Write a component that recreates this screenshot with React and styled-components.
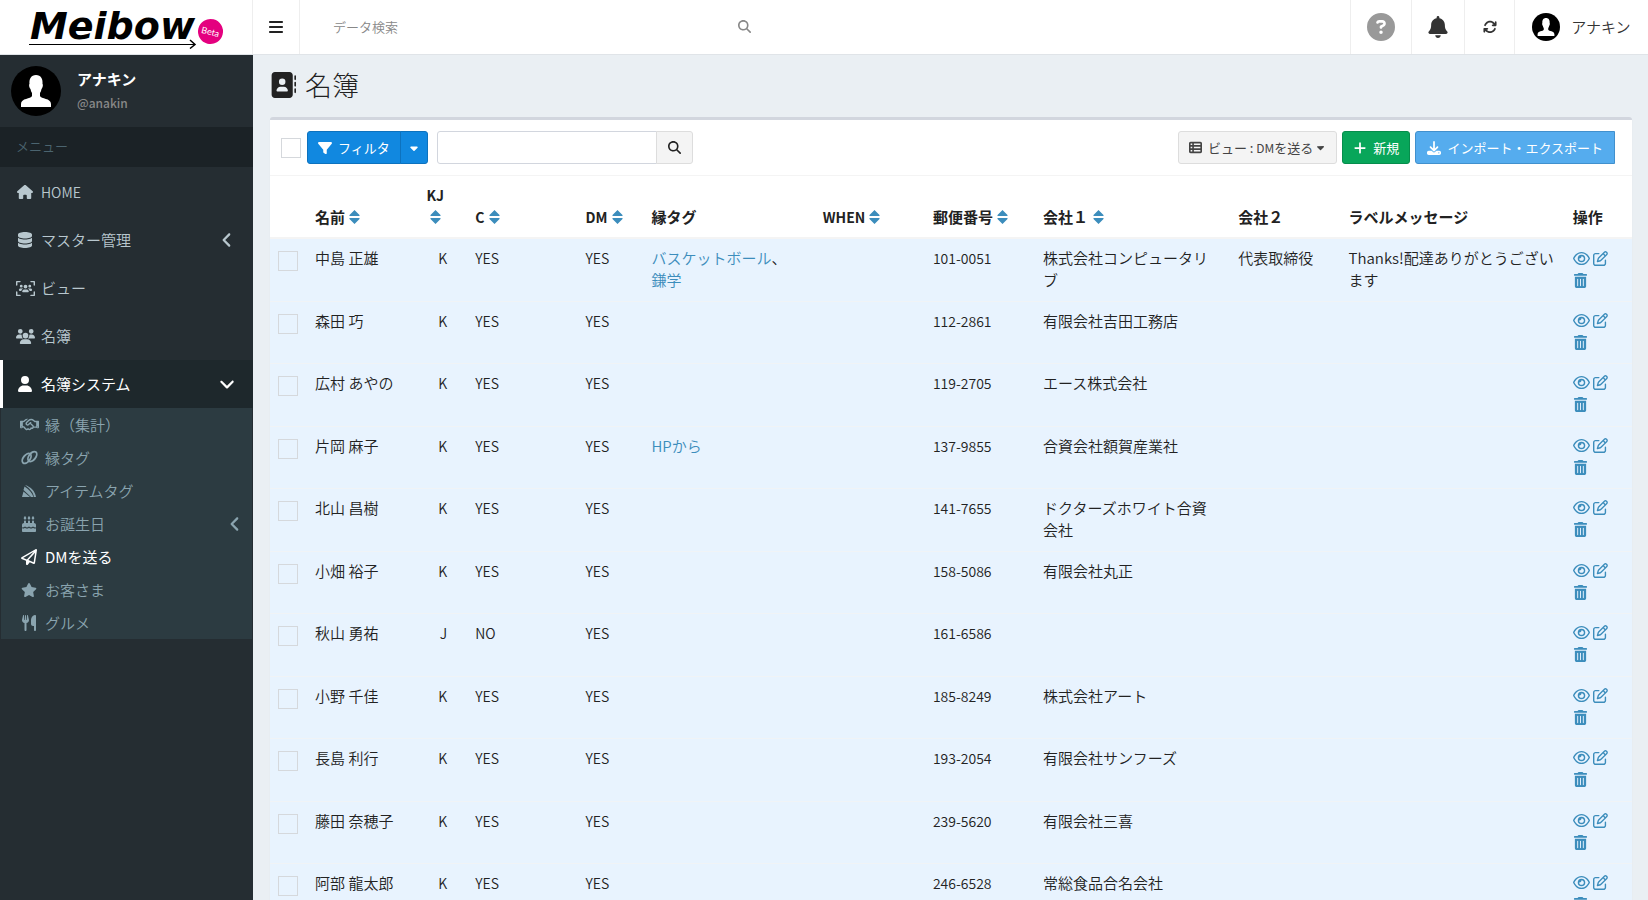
import React from "react";
import styled, { createGlobalStyle } from "styled-components";
import {
  FaAddressBook, FaAngleDown, FaAngleLeft, FaArrowsRotate, FaBars, FaBell, FaCakeCandles, FaCaretDown,
  FaCircleQuestion, FaDatabase, FaDownload, FaFilter, FaHouse, FaMagnifyingGlass,
  FaPlus, FaRegEye, FaRegHandshake, FaRegPaperPlane, FaRegPenToSquare, FaStar, FaTableList,
  FaTrashCan, FaUser, FaUsers, FaUsersViewfinder, FaUtensils,
} from "react-icons/fa6";

const ItemTagIcon = () => (
  <svg width="1em" height="1em" viewBox="0 0 16 16" fill="currentColor" aria-hidden="true">
    <path d="M4 2c6 2 10 6 11 12h-2C12 9 9 6 4 2z" />
    <path d="M3.500 3.500c4.500 3 7.500 6 9 10.500H10L2.500 7z" />
    <path d="M1 14l1.500-5.500L9 14z" />
  </svg>
);

const RingsIcon = () => (
  <svg width="1em" height="1em" viewBox="0 0 20 20" fill="none" stroke="currentColor" strokeWidth="2" aria-hidden="true">
    <ellipse cx="7" cy="11" rx="3.500" ry="6" transform="rotate(38 7 11)" />
    <ellipse cx="13" cy="9" rx="3.500" ry="6" transform="rotate(38 13 9)" />
  </svg>
);

const menu = [
  { label: "HOME", icon: FaHouse, latin: true },
  { label: "マスター管理", icon: FaDatabase, arrow: FaAngleLeft },
  { label: "ビュー", icon: FaUsersViewfinder, wide: true },
  { label: "名簿", icon: FaUsers, wide: true },
  { label: "名簿システム", icon: FaUser, arrow: FaAngleDown, active: true },
];

const submenu = [
  { label: "縁（集計）", icon: FaRegHandshake, wide: true },
  { label: "縁タグ", icon: RingsIcon, wide: true },
  { label: "アイテムタグ", icon: ItemTagIcon },
  { label: "お誕生日", icon: FaCakeCandles, arrow: true },
  { label: "DMを送る", icon: FaRegPaperPlane, active: true },
  { label: "お客さま", icon: FaStar },
  { label: "グルメ", icon: FaUtensils },
];

const columns = [
  { label: "名前", width: 110, sort: true },
  { label: "KJ", width: 50, sort: true, latin: true, center: true },
  { label: "C", width: 110, sort: true, latin: true },
  { label: "DM", width: 66, sort: true, latin: true },
  { label: "縁タグ", width: 171 },
  { label: "WHEN", width: 110, sort: true, latin: true },
  { label: "郵便番号", width: 110, sort: true },
  { label: "会社１", width: 195, sort: true },
  { label: "会社２", width: 110 },
  { label: "ラベルメッセージ", width: 224 },
  { label: "操作", width: 67 },
];

const rows = [
  { name: "中島 正雄", tags: ["バスケットボール", "鎌学"], zip: "101-0051", company: "株式会社コンピュータリブ", title: "代表取締役", message: "Thanks!配達ありがとうございます" },
  { name: "森田 巧", zip: "112-2861", company: "有限会社吉田工務店" },
  { name: "広村 あやの", zip: "119-2705", company: "エース株式会社" },
  { name: "片岡 麻子", tags: ["HPから"], zip: "137-9855", company: "合資会社額賀産業社" },
  { name: "北山 昌樹", zip: "141-7655", company: "ドクターズホワイト合資会社" },
  { name: "小畑 裕子", zip: "158-5086", company: "有限会社丸正" },
  { name: "秋山 勇祐", kj: "J", c: "NO", zip: "161-6586" },
  { name: "小野 千佳", zip: "185-8249", company: "株式会社アート" },
  { name: "長島 利行", zip: "193-2054", company: "有限会社サンフーズ" },
  { name: "藤田 奈穂子", zip: "239-5620", company: "有限会社三喜" },
  { name: "阿部 龍太郎", zip: "246-6528", company: "常総食品合名会社" },
];

const Avatar = ({ size }) => (
  <svg width={size} height={size} viewBox="0 0 50 50" aria-hidden="true">
    <circle cx="25" cy="25" r="25" fill="#000" />
    <path
      fill="#fff"
      d="M25 9c-5 0-7 4-6.500 9-.8.500-.3 4 1 5 .3 2 1 3 1.500 4v3c-1 3-11 2-11 8v3h30v-3c0-6-10-5-11-8v-3c.5-1 1.200-2 1.500-4 1.300-1 1.800-4.500 1-5 .5-5-1.500-9-6.500-9z"
    />
  </svg>
);

const Sort = () => (
  <SortIcon viewBox="0 0 10 14" aria-hidden="true">
    <path d="M5 0l5 5v1H0V5zM0 8h10v1l-5 5-5-5z" />
  </SortIcon>
);

const App = () => {
  return (
    <>
      <GlobalStyle />
      <Header>
        <Logo href="#">
          <LogoWord>Meibow</LogoWord>
          <LogoArrow viewBox="0 0 168 10" aria-hidden="true">
            <path d="M0 5.500h165" fill="none" stroke="#000" />
            <path d="M161 1l5 4.500-5 4" fill="none" stroke="#000" strokeWidth="1.500" />
          </LogoArrow>
          <Beta>Beta</Beta>
        </Logo>
        <Toggle aria-label="メニュー切替">
          <FaBars size={16} />
        </Toggle>
        <GlobalSearch>
          <input type="text" placeholder="データ検索" aria-label="データ検索" />
          <button aria-label="検索">
            <FaMagnifyingGlass size={13} />
          </button>
        </GlobalSearch>
        <HeaderButton $width={61} $color="#999" aria-label="ヘルプ">
          <FaCircleQuestion size={28} />
        </HeaderButton>
        <HeaderButton $width={53} aria-label="お知らせ">
          <FaBell size={22} />
        </HeaderButton>
        <HeaderButton $width={50} aria-label="更新">
          <FaArrowsRotate size={14} />
        </HeaderButton>
        <HeaderButton $width={134}>
          <Avatar size={28} />
          アナキン
        </HeaderButton>
      </Header>
      <Body>
        <Sidebar>
          <UserPanel>
            <Avatar size={50} />
            <div>
              <UserName>アナキン</UserName>
              <UserId>@anakin</UserId>
            </div>
          </UserPanel>
          <MenuTitle>メニュー</MenuTitle>
          <Menu>
            {menu.map(({ label, icon: Icon, arrow: Arrow, active, latin, wide }) => (
              <MenuItem href="#" key={label} $active={active} $latin={latin}>
                <IconSlot $wide={wide}>
                  <Icon />
                </IconSlot>
                {label}
                {Arrow && <Arrow className="arrow" />}
              </MenuItem>
            ))}
            <Submenu>
              {submenu.map(({ label, icon: Icon, arrow, active, wide }) => (
                <SubItem href="#" key={label} $active={active}>
                  <IconSlot $wide={wide}>
                    <Icon />
                  </IconSlot>
                  {label}
                  {arrow && <FaAngleLeft className="arrow" />}
                </SubItem>
              ))}
            </Submenu>
          </Menu>
        </Sidebar>
        <Content>
          <Title>
            <FaAddressBook size={26} />
            名簿
          </Title>
          <Box>
            <Toolbar>
              <Checkbox type="checkbox" aria-label="すべて選択" />
              <SplitButton>
                <Button $kind="primary">
                  <FaFilter size={14} />
                  フィルタ
                </Button>
                <Button $kind="primary" aria-label="フィルタを開く">
                  <FaCaretDown size={12} />
                </Button>
              </SplitButton>
              <SearchGroup>
                <input type="text" aria-label="名簿を検索" />
                <button aria-label="検索">
                  <FaMagnifyingGlass size={13} />
                </button>
              </SearchGroup>
              <Actions>
                <Button>
                  <FaTableList size={13} />
                  <span>
                    ビュー : <small>DM</small>を送る
                  </span>
                  <FaCaretDown size={11} className="caret" />
                </Button>
                <Button $kind="success">
                  <FaPlus size={14} />
                  新規
                </Button>
                <Button $kind="info">
                  <FaDownload size={14} />
                  インポート・エクスポート
                </Button>
              </Actions>
            </Toolbar>
            <Table>
              <colgroup>
                <col style={{ width: 37 }} />
                {columns.map(({ label, width }) => (
                  <col key={label} style={{ width }} />
                ))}
              </colgroup>
              <thead>
                <tr>
                  <Th aria-label="選択" />
                  {columns.map(({ label, sort, latin, center }) => (
                    <Th key={label} $latin={latin} $center={center}>
                      {label} {sort && <Sort />}
                    </Th>
                  ))}
                </tr>
              </thead>
              <tbody>
                {rows.map((row) => (
                  <tr key={row.zip}>
                    <CheckCell>
                      <Checkbox type="checkbox" aria-label={row.name} />
                    </CheckCell>
                    <Td>{row.name}</Td>
                    <Td $latin $right $wide>{row.kj || "K"}</Td>
                    <Td $latin>{row.c || "YES"}</Td>
                    <Td $latin>YES</Td>
                    <Td $wide>
                      {(row.tags || []).map((tag, i) => (
                        <React.Fragment key={tag}>
                          {i > 0 && "、"}
                          <a href="#">{tag}</a>
                        </React.Fragment>
                      ))}
                    </Td>
                    <Td />
                    <Td $latin>{row.zip}</Td>
                    <Td $wide>{row.company}</Td>
                    <Td>{row.title}</Td>
                    <Td>{row.message}</Td>
                    <Td>
                      <RowActions>
                        <a href="#" aria-label="表示"><FaRegEye size={17} /></a>
                        <a href="#" aria-label="編集"><FaRegPenToSquare size={15} /></a>
                        <a href="#" aria-label="削除"><FaTrashCan size={15} /></a>
                      </RowActions>
                    </Td>
                  </tr>
                ))}
              </tbody>
            </Table>
          </Box>
        </Content>
      </Body>
    </>
  );
};

const GlobalStyle = createGlobalStyle`
  * {
    box-sizing: border-box;
  }
  body {
    margin: 0;
    height: 100vh;
    overflow: hidden;
    background: #eaeff3;
    color: #222;
    font-family: "Noto Sans CJK JP", sans-serif;
    font-size: 15px;
    font-weight: 350;
    line-height: 22px;
  }
  button, input {
    font: inherit;
    color: inherit;
  }
  button {
    cursor: pointer;
  }
  a {
    color: #3c8dbc;
    text-decoration: none;
  }
  svg {
    flex: none;
  }
`;

const Header = styled.header`
  display: flex;
  height: 55px;
  background: #fff;
  border-bottom: 1px solid #e0e4e8;
`;

const Logo = styled.a`
  position: relative;
  width: 253px;
  flex: none;
  border-right: 1px solid #eee;
  color: #000;
`;

const LogoWord = styled.span`
  position: absolute;
  left: 30px;
  top: 4px;
  font: italic 700 38px/44px "DejaVu Sans", sans-serif;
`;

const LogoArrow = styled.svg`
  position: absolute;
  left: 29px;
  top: 39px;
  width: 168px;
`;

const Beta = styled.span`
  position: absolute;
  left: 198px;
  top: 19px;
  width: 25px;
  border-radius: 50%;
  background: #e4007f;
  color: #fff;
  font: 9px/25px Lato, sans-serif;
  text-align: center;
  transform: rotate(14deg);
`;

const Toggle = styled.button`
  width: 47px;
  border: none;
  border-right: 1px solid #eee;
  background: none;
  display: flex;
  align-items: center;
  justify-content: center;
`;

const GlobalSearch = styled.div`
  display: flex;
  flex: 1;
  padding-left: 33px;
  input {
    width: 397px;
    border: none;
    font-size: 13px;
    padding: 0;
  }
  input::placeholder {
    color: #888;
  }
  button {
    border: none;
    background: none;
    padding: 0 8px;
    color: #888;
  }
`;

const HeaderButton = styled.button`
  width: ${({ $width }) => $width}px;
  color: ${({ $color }) => $color || "#333"};
  display: flex;
  align-items: center;
  justify-content: center;
  gap: 11px;
  padding: 0;
  border: none;
  border-left: 1px solid #eee;
  background: none;
`;

const Body = styled.div`
  display: flex;
  height: calc(100vh - 55px);
`;

const Sidebar = styled.aside`
  width: 253px;
  flex: none;
  background: #252d32;
`;

const UserPanel = styled.div`
  display: flex;
  gap: 16px;
  padding: 11px;
  height: 72px;
`;

const UserName = styled.div`
  color: #fff;
  font-weight: 700;
  line-height: 26px;
`;

const UserId = styled.div`
  color: #888;
  font-size: 12px;
  font-weight: 500;
`;

const MenuTitle = styled.div`
  padding: 0 16px 2px;
  background: #1b2226;
  color: #4b646f;
  font-size: 13px;
  line-height: 38px;
`;

const Menu = styled.nav`
  padding-top: 1px;
`;

const IconSlot = styled.span`
  display: flex;
  justify-content: center;
  width: 20px;
  font-size: ${({ $wide }) => ($wide ? 19 : 16)}px;
`;

const MenuItem = styled.a`
  display: flex;
  align-items: center;
  gap: 6px;
  height: 48px;
  padding: 0 17px 0 12px;
  border-left: 3px solid ${({ $active }) => ($active ? "#fff" : "transparent")};
  background: ${({ $active }) => ($active ? "#1e282c" : "none")};
  color: ${({ $active }) => ($active ? "#fff" : "#b8c7ce")};
  font-size: ${({ $latin }) => ($latin ? 14 : 15)}px;
  font-weight: ${({ $active }) => ($active ? 400 : 350)};
  .arrow {
    margin-left: auto;
    font-size: 18px;
  }
`;

const Submenu = styled.div`
  margin: 0 1px;
  background: #2c3b41;
`;

const SubItem = styled.a`
  display: flex;
  align-items: center;
  gap: 6px;
  height: 33px;
  padding: 0 8px 0 18px;
  color: ${({ $active }) => ($active ? "#fff" : "#8aa4af")};
  font-weight: ${({ $active }) => ($active ? 400 : 350)};
  .arrow {
    margin-left: auto;
    font-size: 18px;
  }
`;

const Content = styled.main`
  flex: 1;
  min-width: 0;
  padding: 14px 16px 0 17px;
`;

const Title = styled.h1`
  display: flex;
  align-items: center;
  gap: 9px;
  margin: 0 0 17px;
  font-size: 27px;
  font-weight: 300;
  line-height: 31px;
`;

const Box = styled.section`
  border-top: 3px solid #d2d6de;
  border-radius: 3px;
  background: #fff;
  box-shadow: 0 1px 1px rgba(0, 0, 0, 0.1);
`;

const Toolbar = styled.div`
  display: flex;
  align-items: center;
  height: 56px;
  padding: 0 17px 0 11px;
  border-bottom: 1px solid #f4f4f4;
`;

const Checkbox = styled.input`
  appearance: none;
  display: block;
  flex: none;
  width: 20px;
  height: 20px;
  margin: 0;
  border: 1px solid #d5d8dc;
`;

const kinds = {
  primary: ["#1188e0", "#0d72be", "#fff"],
  success: ["#08a65a", "#068d4c", "#fff"],
  info: ["#55acee", "#4190cd", "#fff"],
  default: ["#f4f4f4", "#ddd", "#444"],
};

const Button = styled.button`
  display: flex;
  align-items: center;
  gap: 6px;
  height: 33px;
  padding: 0 ${({ $kind }) => ($kind === "info" ? 11 : 10)}px;
  border: 1px solid ${({ $kind = "default" }) => kinds[$kind][1]};
  border-radius: ${({ $kind }) => ($kind === "info" ? "3px 0 0 3px" : "3px")};
  background: ${({ $kind = "default" }) => kinds[$kind][0]};
  color: ${({ $kind = "default" }) => kinds[$kind][2]};
  font-size: 13px;
  font-weight: 400;
  white-space: nowrap;
  small {
    font-size: 12px;
  }
  .caret {
    margin-left: -4px;
  }
`;

const SplitButton = styled.div`
  display: flex;
  margin: 0 9px 0 6px;
  button:first-child {
    border-radius: 3px 0 0 3px;
  }
  button:last-child {
    padding: 0 7px;
    margin-left: -1px;
    border-radius: 0 3px 3px 0;
  }
`;

const SearchGroup = styled.div`
  display: flex;
  height: 33px;
  input {
    width: 220px;
    border: 1px solid #d2d6de;
    border-radius: 3px 0 0 3px;
  }
  button {
    width: 37px;
    margin-left: -1px;
    border: 1px solid #ddd;
    border-radius: 0 3px 3px 0;
    background: #f4f4f4;
    display: flex;
    align-items: center;
    justify-content: center;
  }
`;

const Actions = styled.div`
  display: flex;
  gap: 5px;
  margin-left: auto;
`;

const Table = styled.table`
  width: 100%;
  table-layout: fixed;
  border-collapse: collapse;
  tbody tr {
    height: 62px;
    background: #e8f3fe;
    border-bottom: 1px solid #f0f3f6;
  }
  tbody tr:nth-child(odd) {
    height: 63px;
  }
`;

const Th = styled.th`
  padding: ${({ $center }) => ($center ? "8px 20px 9px 6px" : "8px 8px 9px")};
  border-bottom: 2px solid #f4f4f4;
  font-size: ${({ $latin }) => ($latin ? 14 : 15)}px;
  font-weight: 700;
  text-align: ${({ $center }) => ($center ? "center" : "left")};
  vertical-align: bottom;
`;

const SortIcon = styled.svg`
  width: 11px;
  height: 14px;
  margin-left: 1px;
  fill: #3c8dbc;
  vertical-align: -1px;
`;

const Td = styled.td`
  padding: 8px ${({ $wide }) => ($wide ? 20 : 8)}px 8px 8px;
  font-size: ${({ $latin }) => ($latin ? 14 : 15)}px;
  text-align: ${({ $right }) => ($right ? "right" : "left")};
  vertical-align: top;
`;

const CheckCell = styled.td`
  padding: 12px 8px;
  vertical-align: top;
`;

const RowActions = styled.div`
  display: flex;
  flex-wrap: wrap;
  gap: 0 3px;
  a {
    display: flex;
    align-items: center;
    height: 22px;
  }
`;

export default App;
